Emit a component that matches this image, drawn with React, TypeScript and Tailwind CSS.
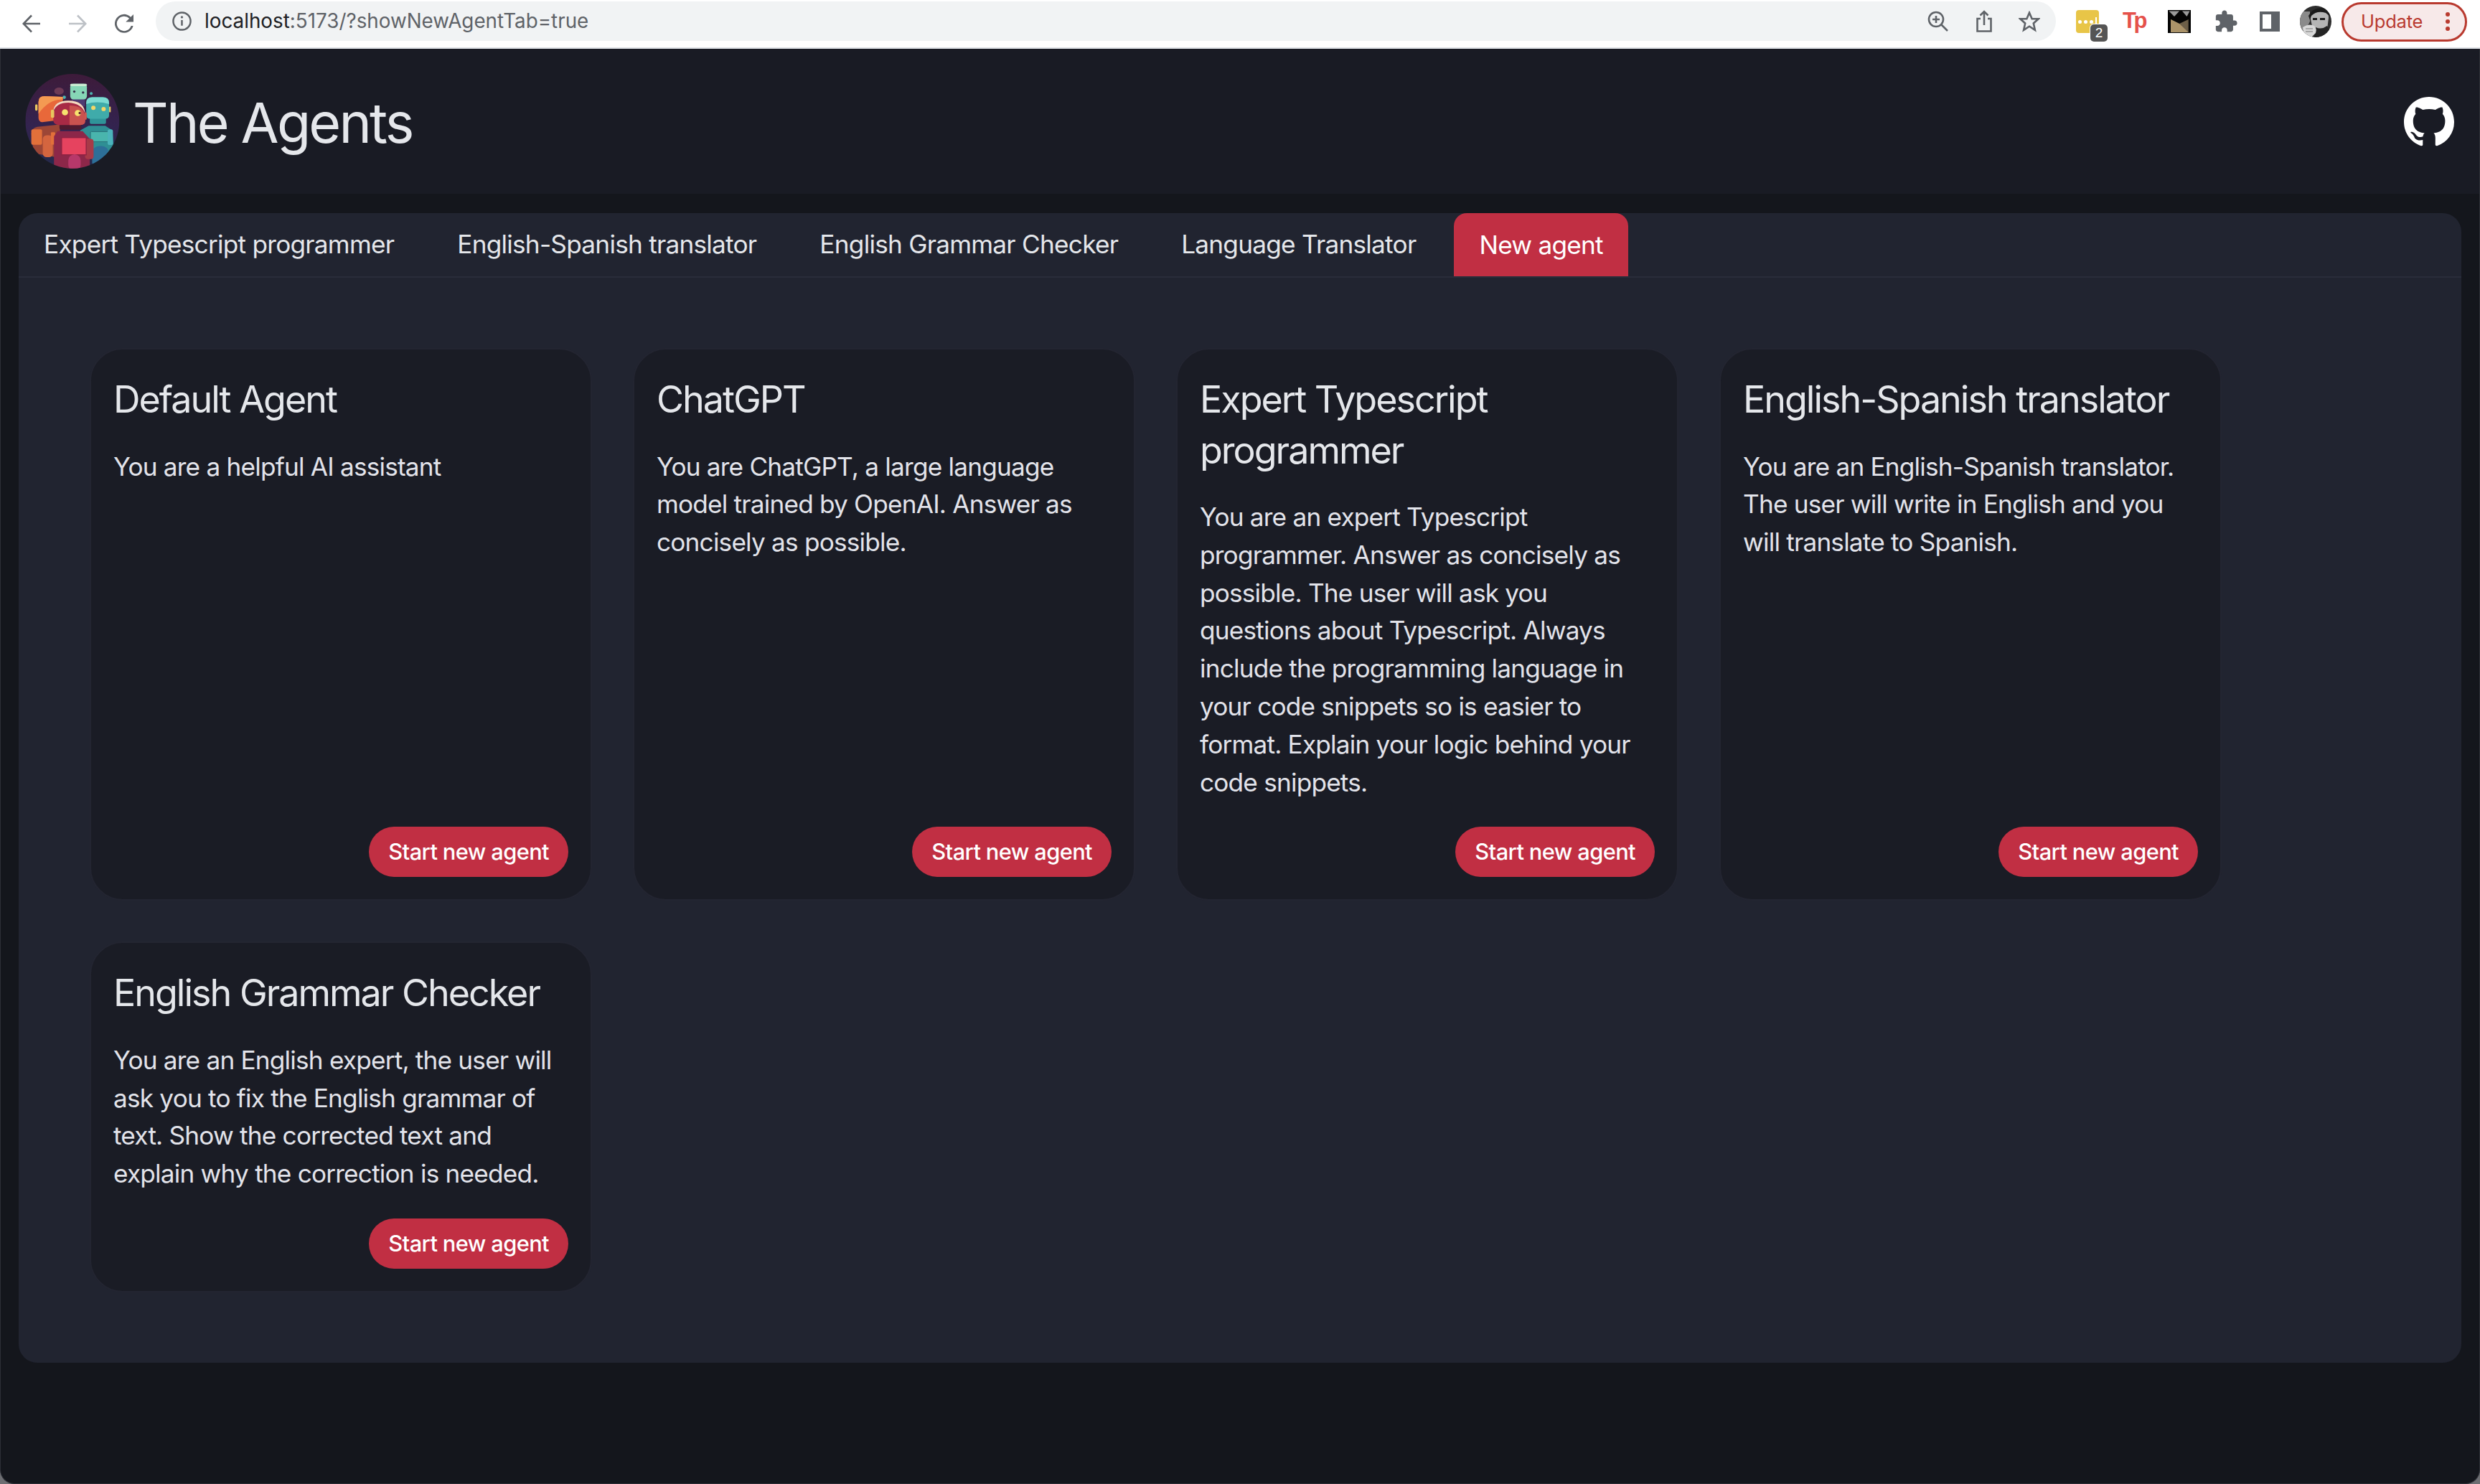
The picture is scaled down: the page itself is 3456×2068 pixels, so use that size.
const GITHUB_PATH =
  "M8 0C3.58 0 0 3.58 0 8c0 3.54 2.29 6.53 5.47 7.59.4.07.55-.17.55-.38 0-.19-.01-.82-.01-1.49-2.01.37-2.53-.49-2.69-.94-.09-.23-.48-.94-.82-1.13-.28-.15-.68-.52-.01-.53.63-.01 1.08.58 1.23.82.72 1.21 1.87.87 2.33.66.07-.52.28-.87.51-1.07-1.78-.2-3.64-.89-3.64-3.95 0-.87.31-1.59.82-2.15-.08-.2-.36-1.02.08-2.12 0 0 .67-.21 2.2.82.64-.18 1.32-.27 2-.27.68 0 1.36.09 2 .27 1.53-1.04 2.2-.82 2.2-.82.44 1.1.16 1.92.08 2.12.51.56.82 1.27.82 2.15 0 3.07-1.87 3.75-3.65 3.95.29.25.54.73.54 1.48 0 1.07-.01 1.93-.01 2.2 0 .21.15.46.55.38A8.013 8.013 0 0016 8c0-4.42-3.58-8-8-8z"

const tabs = [
  "Expert Typescript programmer",
  "English-Spanish translator",
  "English Grammar Checker",
  "Language Translator",
]

const agents = [
  { title: "Default Agent", text: "You are a helpful AI assistant" },
  {
    title: "ChatGPT",
    text: "You are ChatGPT, a large language model trained by OpenAI. Answer as concisely as possible.",
  },
  {
    title: "Expert Typescript programmer",
    text: "You are an expert Typescript programmer. Answer as concisely as possible. The user will ask you questions about Typescript. Always include the programming language in your code snippets so is easier to format. Explain your logic behind your code snippets.",
  },
  {
    title: "English-Spanish translator",
    text: "You are an English-Spanish translator. The user will write in English and you will translate to Spanish.",
  },
  {
    title: "English Grammar Checker",
    text: "You are an English expert, the user will ask you to fix the English grammar of text. Show the corrected text and explain why the correction is needed.",
  },
]

const RobotsLogo = () => (
  <svg viewBox="105 308 395 397" className="w-[132px] h-[132px] shrink-0">
    <defs>
      <linearGradient id="logoBg" x1="0" y1="0" x2="0" y2="1">
        <stop offset="0" stopColor="#3d1b3a" />
        <stop offset="0.55" stopColor="#33234f" />
        <stop offset="1" stopColor="#232a4c" />
      </linearGradient>
      <clipPath id="logoClip">
        <ellipse cx="302" cy="506" rx="197" ry="198" />
      </clipPath>
    </defs>
    <g clipPath="url(#logoClip)">
      <rect x="105" y="308" width="395" height="397" fill="url(#logoBg)" />
      <ellipse cx="246" cy="380" rx="20" ry="15" fill="#6d3a55" />
      {/* mint robot */}
      <rect x="300" y="410" width="55" height="34" fill="#4d3b72" />
      <rect x="293" y="349" width="70" height="66" rx="14" fill="#86d6b6" />
      <rect x="293" y="349" width="70" height="10" rx="5" fill="#c9ecd2" />
      <circle cx="310" cy="382" r="5" fill="#33304a" />
      <circle cx="347" cy="386" r="5" fill="#33304a" />
      <circle cx="381" cy="390" r="6" fill="#4bb3b0" />
      <circle cx="268" cy="406" r="7" fill="#4bb3b0" />
      {/* orange robot */}
      <path d="M130 560 Q130 535 155 530 L250 520 L250 660 L140 640 Z" fill="#9c4636" />
      <rect x="130" y="540" width="45" height="65" rx="6" fill="#e2703a" />
      <path d="M160 425 Q160 401 185 401 L262 404 L262 500 L175 510 Q160 510 160 490 Z" fill="#e8683a" />
      <path d="M160 425 Q160 401 185 401 L262 404 L262 416 Q205 412 160 475 Z" fill="#f49a52" />
      <rect x="146" y="436" width="10" height="26" rx="4" fill="#e8c65e" />
      {/* teal robot */}
      <path d="M335 545 L370 525 L440 525 L470 545 L478 650 L335 650 Z" fill="#2f8f94" />
      <rect x="378" y="550" width="75" height="42" rx="4" fill="#49b5ad" stroke="#2a6f78" strokeWidth="3" />
      <rect x="385" y="610" width="70" height="100" rx="30" fill="#2d6f98" />
      <rect x="450" y="540" width="22" height="66" rx="8" fill="#4bb3bb" />
      <rect x="375" y="490" width="68" height="28" rx="6" fill="#2f9499" />
      <path d="M360 430 Q360 406 385 406 L430 406 Q456 406 456 430 L456 480 Q456 496 440 496 L376 496 Q360 496 360 480 Z" fill="#3fabaa" />
      <path d="M360 430 Q360 406 385 406 L430 406 Q456 406 456 430 L456 434 Q405 420 360 434 Z" fill="#7cdad2" />
      <circle cx="390" cy="450" r="9" fill="#f2d768" />
      <circle cx="433" cy="455" r="9" fill="#f2d768" />
      <rect x="456" y="445" width="7" height="24" rx="3" fill="#e8c65e" />
      {/* red robot */}
      <rect x="178" y="565" width="42" height="92" rx="16" fill="#d4653f" />
      <rect x="212" y="552" width="18" height="52" rx="4" fill="#e2703a" />
      <path d="M240 548 L345 548 L375 580 L375 710 L225 710 L225 570 Z" fill="#8c2749" />
      <rect x="355" y="580" width="36" height="85" rx="12" fill="#a83a48" />
      <rect x="257" y="575" width="103" height="72" fill="#e6435f" stroke="#8c2242" strokeWidth="4" />
      <rect x="285" y="645" width="52" height="70" rx="26" fill="#b7386a" />
      <rect x="248" y="510" width="92" height="32" rx="10" fill="#4f1a2f" />
      <path d="M222 470 Q222 420 285 420 Q356 420 356 480 L356 505 Q356 522 335 522 L245 522 Q222 522 222 500 Z" fill="#a82a45" />
      <path d="M290 440 Q352 440 356 490 L356 505 Q356 522 335 522 L290 522 Z" fill="#c9524f" />
      <path d="M222 466 Q224 420 285 420 Q352 420 356 476 Q345 432 285 428 Q234 428 222 466 Z" fill="#f3dcc2" />
      <rect x="212" y="458" width="14" height="34" rx="6" fill="#e8c65e" />
      <rect x="354" y="470" width="8" height="30" rx="3" fill="#d0594f" />
      <circle cx="271" cy="469" r="13" fill="#f7e26e" />
      <circle cx="325" cy="472" r="13" fill="#f7e26e" />
      <circle cx="333" cy="472" r="5" fill="#5a1f2e" />
    </g>
  </svg>
)

const ChromeBar = () => (
  <div className="flex items-center h-[66px] bg-white shrink-0 relative">
    <svg viewBox="0 0 26 26" className="w-[26px] h-[26px] ml-[31px] shrink-0" fill="none" stroke="#5f6368" strokeWidth="2.6">
      <path d="M25 13H2M13 1.500 1.800 13 13 24.500" />
    </svg>
    <svg viewBox="0 0 26 26" className="w-[26px] h-[26px] ml-[38px] shrink-0" fill="none" stroke="#bdc1c6" strokeWidth="2.6">
      <path d="M1 13h23M13 1.500 24.200 13 13 24.500" />
    </svg>
    <svg viewBox="0 0 28 28" className="w-[28px] h-[28px] ml-[38px] shrink-0" fill="#5f6368">
      <path d="M23.200 4.700A13 13 0 1 0 26.600 17h-2.900a10.200 10.200 0 1 1-2.500-10.300L16.300 11.600H27V1z" />
    </svg>
    <div className="ml-[30px] w-[2648px] h-[55px] mt-[-7px] rounded-full bg-[#f1f3f4] flex items-center">
      <svg viewBox="0 0 26 26" className="w-[27px] h-[27px] ml-[23px] shrink-0" fill="none" stroke="#5f6368" strokeWidth="2.4">
        <circle cx="13" cy="13" r="11.600" />
        <path d="M13 11.500v7.500" />
        <circle cx="13" cy="7.600" r="1.600" fill="#5f6368" stroke="none" />
      </svg>
      <div className="ml-[18px] text-[27.800px] leading-none text-[#5f6368]">
        <span className="text-[#202124]">localhost</span>:5173/?showNewAgentTab=true
      </div>
      <svg viewBox="0 0 30 30" className="w-[30px] h-[30px] ml-auto shrink-0" fill="none" stroke="#5f6368" strokeWidth="2.6">
        <circle cx="12" cy="12" r="10" />
        <path d="M12 7v10M7 12h10M19 19l9 9" />
      </svg>
      <svg viewBox="0 0 24 32" className="w-[24px] h-[32px] ml-[37px] shrink-0" fill="none" stroke="#5f6368" strokeWidth="2.6">
        <path d="M7 12H2.500v17.500h19V12H17M12 21V2M6.500 7.500 12 2l5.500 5.500" />
      </svg>
      <svg viewBox="0 0 32 32" className="w-[30px] h-[30px] ml-[36px] mr-[22px] shrink-0" fill="none" stroke="#5f6368" strokeWidth="2.8">
        <path d="m16 3 3.900 9h9.600l-7.300 6.600 2.200 10L16 23.200 7.600 28.600l2.200-10L2.500 12h9.600z" />
      </svg>
    </div>
    <div className="flex items-center ml-[28px] mt-[-6px]">
      <div className="relative w-[32px] h-[32px] bg-[#e8c547] rounded-[4px] flex items-center pl-[3px] gap-[3px]">
        <span className="w-[5px] h-[5px] rounded-full bg-white" />
        <span className="w-[5px] h-[5px] rounded-full bg-white" />
        <span className="w-[5px] h-[5px] rounded-full bg-white" />
        <span className="w-[2px] h-[12px] bg-white" />
        <span className="absolute left-[20px] top-[20px] w-[24px] h-[24px] rounded-[5px] bg-[#555555] ring-1 ring-white text-white text-[19px] leading-[24px] text-center font-['Liberation_Sans',sans-serif]">
          2
        </span>
      </div>
      <div className="ml-[33px] w-[32px] h-[32px] text-[#e5514a] text-[31px] leading-[30px] font-bold tracking-[-3.500px] font-['Liberation_Sans',sans-serif]">
        Tp
      </div>
      <svg viewBox="0 0 32 32" className="w-[32px] h-[32px] ml-[31px] shrink-0">
        <rect width="32" height="32" fill="#050505" />
        <path d="M1.500 1.500h14.500l-7 7.500z" fill="#9a9a9a" />
        <path d="M30.500 1.500H20l6.500 7.500z" fill="#9a9a9a" />
        <path d="M4 13l12 6 12.700-6v18H4z" fill="#6d5f48" />
        <path d="M4 13l12 6 12.700 12H4z" fill="#ab9369" />
      </svg>
      <svg viewBox="0 0 24 24" className="w-[34px] h-[34px] ml-[32px] shrink-0" fill="#5f6368">
        <path d="M20.500 11H19V7c0-1.100-.9-2-2-2h-4V3.500C13 2.120 11.880 1 10.500 1S8 2.120 8 3.500V5H4c-1.100 0-1.990.9-1.990 2v3.800H3.500c1.490 0 2.700 1.210 2.700 2.700s-1.210 2.700-2.700 2.700H2V20c0 1.100.9 2 2 2h3.800v-1.500c0-1.490 1.210-2.700 2.700-2.700 1.490 0 2.700 1.210 2.700 2.700V22H17c1.100 0 2-.9 2-2v-4h1.500c1.380 0 2.500-1.120 2.500-2.500S21.880 11 20.500 11z" />
      </svg>
      <div className="ml-[30px] w-[28px] h-[28px] border-[4px] border-r-[12px] border-[#5f6368] shrink-0" />
      <svg viewBox="0 0 44 44" className="w-[44px] h-[44px] ml-[28px] shrink-0">
        <defs>
          <clipPath id="avatarClip">
            <circle cx="22" cy="22" r="22" />
          </clipPath>
        </defs>
        <g clipPath="url(#avatarClip)">
          <rect width="44" height="44" fill="#2e2e2e" />
          <path d="M0 8h14v14L8 34H0z" fill="#8a8a8a" />
          <path d="M14 14q6-10 18-9 8 2 8 12l-2 16q-10 8-20 0z" fill="#b5b5b5" />
          <path d="M12 14Q18 2 32 3q10 2 10 12l-6-5q-12-4-20 4l-2 6z" fill="#1b1b1b" />
          <path d="M22 30q8 4 16-2l4 8-8 8H20z" fill="#242424" />
          <rect x="18" y="17" width="6" height="3" fill="#1e1e1e" />
          <rect x="28" y="17" width="7" height="3" fill="#1e1e1e" />
          <path d="M4 30q8-6 16-2 4 4 2 10l-6 6H6z" fill="#d8d8d8" />
          <path d="M8 32h10M8 36h10" stroke="#777" strokeWidth="1" />
        </g>
      </svg>
      <div className="ml-[14px] w-[175px] h-[55px] rounded-full border-[3px] border-[#b93a2f] bg-[#f7e9e9] flex items-center pl-[24px] text-[#b93a2f] text-[25.500px] leading-none tracking-[-0.2px]">
        Update
        <span className="ml-auto mr-[21px] flex flex-col gap-[4px]">
          <span className="w-[6px] h-[6px] rounded-full bg-[#b93a2f]" />
          <span className="w-[6px] h-[6px] rounded-full bg-[#b93a2f]" />
          <span className="w-[6px] h-[6px] rounded-full bg-[#b93a2f]" />
        </span>
      </div>
    </div>
  </div>
)

const AgentCard = ({ title, text }: { title: string; text: string }) => (
  <div className="w-[700px] flex flex-col rounded-[46px] border-2 border-[#232531] bg-[#1a1c25] pt-[35px] px-[31px] pb-[31px]">
    <h2 className="text-[52px] leading-[70.500px] text-[#e5e7eb] tracking-[-2px]">{title}</h2>
    <p className="mt-[31px] text-[35.200px] leading-[52.800px] tracking-[-0.8px] text-[#e2e3ea]">{text}</p>
    <div className="mt-auto pt-[36px] flex justify-end">
      <button className="h-[70px] px-[27px] rounded-full bg-[#c12f43] text-white text-[30.800px] tracking-[-0.6px] font-medium">
        Start new agent
      </button>
    </div>
  </div>
)

export default function App() {
  return (
    <div className="min-h-screen bg-[#6d6e72] flex flex-col font-[Inter,sans-serif]">
      <ChromeBar />
      <div className="h-[2px] bg-[#dee1e6] shrink-0" />
      <div className="flex-1 flex flex-col bg-[#14161c] rounded-b-[20px] border-x border-b border-[#2e3037] overflow-hidden">
        <header className="h-[202px] bg-[#191b24] flex items-center justify-between pl-[34px] pr-[35px] shrink-0">
          <div className="flex items-center">
            <RobotsLogo />
            <h1 className="ml-[18px] mt-[4px] text-[77px] leading-none text-[#e5e7eb] tracking-[-2.800px]">The Agents</h1>
          </div>
          <svg viewBox="0 0 16 16" className="w-[70px] h-[70px] mt-[2px]" fill="#ffffff">
            <path d={GITHUB_PATH} />
          </svg>
        </header>
        <main className="mx-[25px] mt-[27px] rounded-[26px] bg-[#212430]">
          <div className="flex h-[90px] border-b-2 border-[#2a2d3a] text-[35.200px] tracking-[-0.750px]">
            {tabs.map((t) => (
              <div key={t} className="px-[35px] mr-[18px] h-[86px] flex items-center text-[#e5e7eb]">
                {t}
              </div>
            ))}
            <div className="px-[35px] h-[88px] flex items-center bg-[#c12f43] text-white rounded-t-[18px]">New agent</div>
          </div>
          <div className="flex flex-wrap gap-[57px] px-[99px] pt-[98px] pb-[98px]">
            {agents.map((a) => (
              <AgentCard key={a.title} title={a.title} text={a.text} />
            ))}
          </div>
        </main>
      </div>
    </div>
  )
}
